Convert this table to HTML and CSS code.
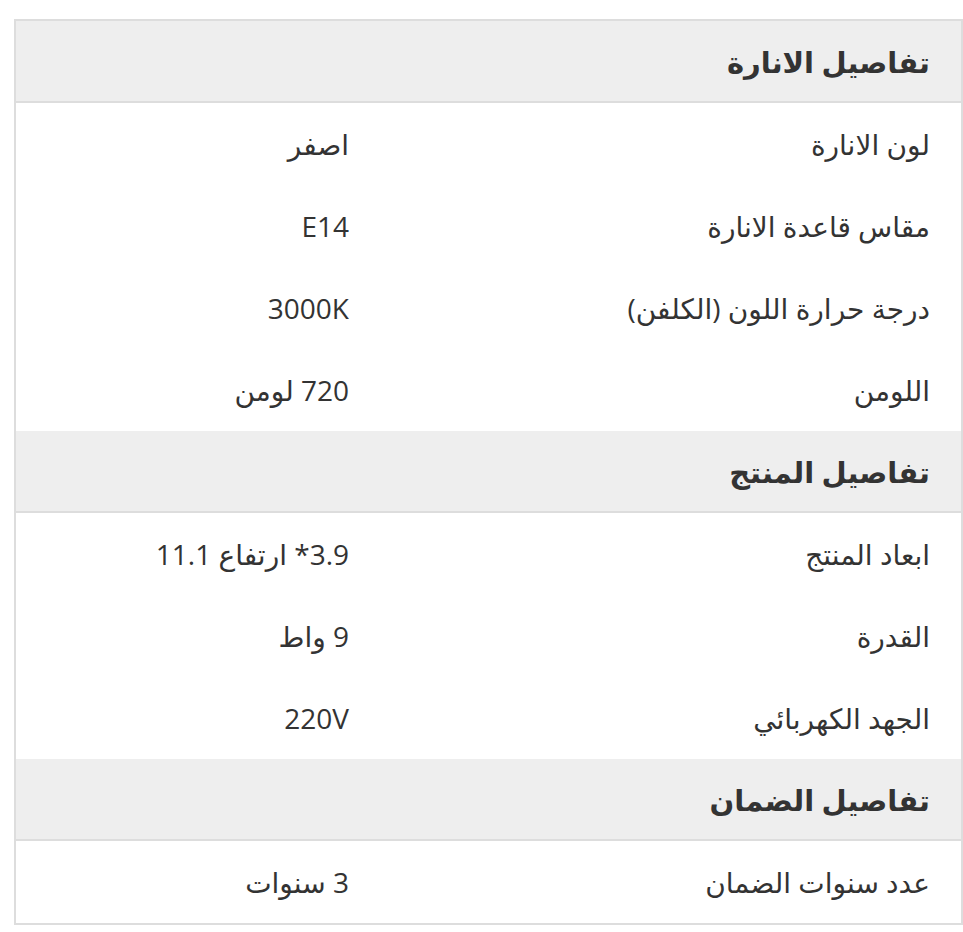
FILE: index.html
```html
<!DOCTYPE html>
<html lang="ar" dir="rtl">
<head>
<meta charset="utf-8">
<title>تفاصيل المنتج</title>
<link rel="stylesheet" href="styles.css">
</head>
<body>
<div class="specs">
  <div class="section-head">تفاصيل الانارة</div>
  <div class="row"><div class="label">لون الانارة</div><div class="value">اصفر</div></div>
  <div class="row"><div class="label">مقاس قاعدة الانارة</div><div class="value">E14</div></div>
  <div class="row"><div class="label">درجة حرارة اللون (الكلفن)</div><div class="value">3000K</div></div>
  <div class="row"><div class="label">اللومن</div><div class="value">720 لومن</div></div>
  <div class="section-head">تفاصيل المنتج</div>
  <div class="row"><div class="label">ابعاد المنتج</div><div class="value">3.9* ارتفاع 11.1</div></div>
  <div class="row"><div class="label">القدرة</div><div class="value">9 واط</div></div>
  <div class="row"><div class="label">الجهد الكهربائي</div><div class="value">220V</div></div>
  <div class="section-head">تفاصيل الضمان</div>
  <div class="row"><div class="label">عدد سنوات الضمان</div><div class="value">3 سنوات</div></div>
</div>
</body>
</html>
```
FILE: styles.css
```css
html, body {
  margin: 0;
  padding: 0;
  background: #ffffff;
}
body {
  font-family: "Open Sans", "DejaVu Sans", sans-serif;
  color: #333333;
  font-size: 28px;
}
.specs {
  box-sizing: border-box;
  width: 949px;
  margin: 19px 0 0 4px;
  border: 2px solid #dddddd;
}
.section-head {
  box-sizing: border-box;
  height: 82px;
  display: flex;
  align-items: center;
  padding: 0 31px;
  background: #eeeeee;
  border-bottom: 2px solid #dddddd;
  font-weight: bold;
  font-size: 29px;
}
.row {
  height: 82px;
  display: grid;
  grid-template-columns: 581px 1fr;
  align-items: center;
}
.label, .value {
  padding: 0 31px;
}
```
